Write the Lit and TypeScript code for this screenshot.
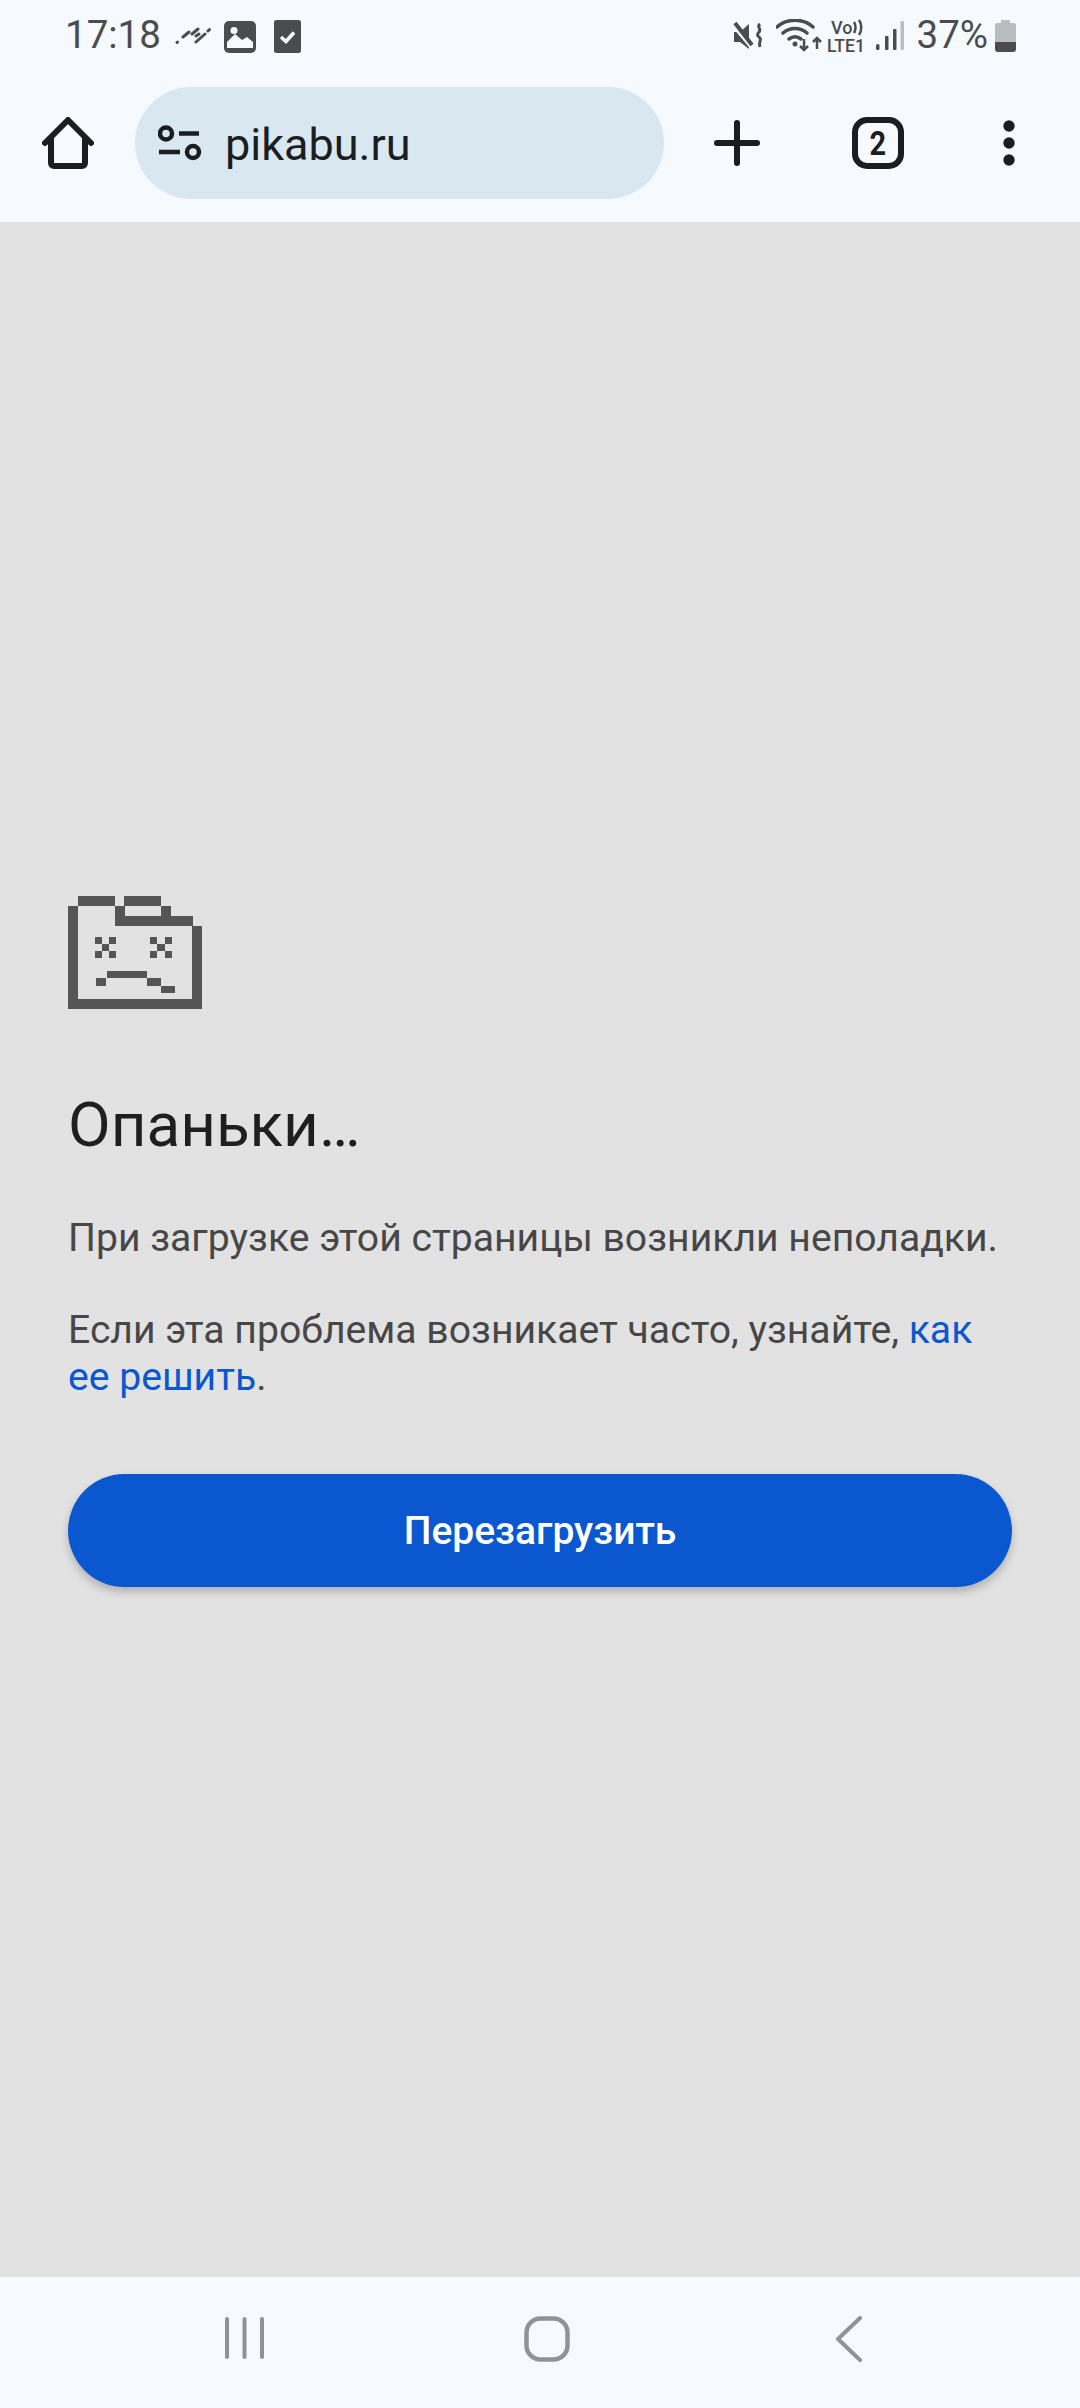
import { LitElement, html, css } from "lit";
import { customElement } from "lit/decorators.js";

@customElement("app-root")
export class AppRoot extends LitElement {
  static styles = css`
    :host { display: block; font-family: Roboto, "Noto Sans", sans-serif; }
    svg { display: block; flex: none; }
    .page { width: 1080px; height: 2408px; display: flex; flex-direction: column; background: #e2e2e2; }
    .top { background: #f6faff; height: 222px; display: flex; flex-direction: column; flex: none; border-bottom: 1px solid #e0e3e6; box-sizing: content-box; }
    .status { height: 70px; padding: 15px 64px 0 65px; display: flex; justify-content: space-between; align-items: flex-start; box-sizing: border-box; color: #4a4c4e; }
    .group { display: flex; align-items: flex-start; }
    .time, .pct { font-size: 38.5px; line-height: 40px; letter-spacing: 0; white-space: nowrap; }
    .toolbar { display: flex; align-items: center; height: 112px; margin-top: 17px; padding-left: 42px; color: #1a1e21; }
    .pill { margin-left: 41px; width: 529px; height: 112px; border-radius: 56px; background: #d9e7f0; display: flex; align-items: center; padding-left: 23px; box-sizing: border-box; }
    .url { margin-left: 23px; margin-top: 3px; font-size: 45px; line-height: 52px; }
    .plus { margin-left: 50px; }
    .tabs { margin-left: 92px; width: 52px; height: 52px; box-sizing: border-box; border: 6px solid #1a1e21; border-radius: 15px; display: flex; align-items: center; justify-content: center; font-size: 34px; line-height: 40px; font-weight: 700; }
    .tabs span { display: block; transform: scaleX(.85); }
    .dots { margin-left: 99px; }
    main { flex: 1; padding: 673px 68px 0; display: flex; flex-direction: column; }
    h1 { margin: 80px 0 0; font-size: 62px; line-height: 72px; font-weight: 400; color: #1f1f1f; }
    p { margin: 0; font-size: 39.15px; line-height: 47px; color: #474747; }
    .p1 { margin-top: 54px; }
    .p2 { margin-top: 45px; }
    a { color: #0b57d0; text-decoration: none; }
    button { margin-top: 73px; height: 113px; width: 944px; border: 0; border-radius: 57px; background: #0b57d0; color: #fff; font: 500 39px Roboto, sans-serif; box-shadow: 0 5px 8px rgba(0,0,0,.22); padding: 0; }
    .nav { height: 132px; flex: none; background: #f6faff; border-top: 1px solid #e4e7ea; box-sizing: border-box; display: flex; padding: 39px 0 0 224px; }
    .nav .h { margin-left: 260px; }
    .nav .b { margin-left: 266px; }
  `;

  render() {
    return html`<div class="page">
      <div class="top">
        <div class="status">
          <div class="group">
            <span class="time">17:18</span>
            <svg style="margin:12px 0 0 14px" width="36" height="18" viewBox="0 0 36 18" fill="none" stroke="#4a4c4e" stroke-width="3" stroke-linecap="round"><path d="M2 15.500l.5-.5M8 10l6-5M17 7l6-5M21 15l9-8M33 4l1.500-1.500M21 9l3-2"/></svg>
            <svg style="margin:6px 0 0 13px" width="32" height="32" viewBox="0 0 32 32"><rect width="32" height="32" rx="5" fill="#4a4c4e"/><path d="M3 27V21L11 13 18 19 23 16 29 21V27Z" fill="#f6faff"/><circle cx="10" cy="9.500" r="3.500" fill="#f6faff"/></svg>
            <svg style="margin:5px 0 0 18px" width="27" height="33" viewBox="0 0 27 33"><rect width="27" height="33" rx="2.500" fill="#4a4c4e"/><path d="M7 17l5 4.500 8-9" fill="none" stroke="#f6faff" stroke-width="3.500"/></svg>
          </div>
          <div class="group">
            <svg style="margin-top:7px" width="30" height="29" viewBox="0 0 30 29" fill="#4a4c4e"><path d="M1 10h6L16 2V27L7 20H1Z"/><path d="M-1 1l20 24" stroke="#f6faff" stroke-width="5"/><path d="M2 1l17 22" stroke="#4a4c4e" stroke-width="4"/><path d="M27 2c-4 3 2 5-1 8s-1 4 1 6-2 4 0 9" fill="none" stroke="#4a4c4e" stroke-width="3"/></svg>
            <svg style="margin-top:4px;margin-left:13px" width="46" height="33" viewBox="0 0 46 33" fill="none" stroke="#4a4c4e" stroke-width="3.500" stroke-linecap="round"><path d="M1 8C11-1 27-1 37 8M7 14c7-6 17-6 24 0M13 20c4-3 8-3 12 0"/><circle cx="19" cy="25" r="2.500" fill="#4a4c4e" stroke="none"/><path d="M28 20v10M24 27l4 4 4-4M41 30V20M37 23l4-4 4 4" stroke-width="2.500" stroke-linecap="butt"/></svg>
            <svg style="margin-top:1px;margin-left:5px" width="40" height="42" viewBox="0 0 40 42" fill="#4a4c4e" font-family="Roboto, sans-serif" font-weight="500"><text x="4" y="18" font-size="18">Vo</text><text x="0" y="36" font-size="18" textLength="38" lengthAdjust="spacingAndGlyphs">LTE1</text><path d="M27 6c2 3 2 8 0 11M32 4c3 4 3 11 0 15" fill="none" stroke="#4a4c4e" stroke-width="2.500"/></svg>
            <svg style="margin-top:5px;margin-left:9px" width="28" height="31" viewBox="0 0 28 31"><rect x="0" y="24" width="3.500" height="6" rx="1.500" fill="#4a4c4e"/><rect x="9" y="16" width="3.500" height="14" rx="1" fill="#4a4c4e"/><rect x="17" y="9" width="3.500" height="21" rx="1" fill="#4a4c4e"/><rect x="24.500" y="1" width="3.500" height="29" rx="1" fill="#babdc0"/></svg>
            <span class="pct" style="margin-left:13px">37%</span>
            <svg style="margin-top:5px;margin-left:7px" width="21" height="32" viewBox="0 0 21 32"><path d="M6 0H15V3H19C20 3 21 4 21 5V22H0V5C0 4 1 3 2 3H6Z" fill="#babdc0"/><path d="M0 22H21V29C21 31 20 32 18 32H3C1 32 0 31 0 29Z" fill="#4a4c4e"/></svg>
          </div>
        </div>
        <div class="toolbar">
          <svg width="52" height="52" viewBox="0 0 52 52" fill="none" stroke="#1a1e21" stroke-width="6" stroke-linejoin="round" stroke-linecap="round"><path d="M3 26L26 3 49 26M9 22V46c0 1.500 1 3 3 3H40c2 0 3-1.500 3-3V22"/></svg>
          <div class="pill">
            <svg width="44" height="36" viewBox="0 0 44 36" fill="none" stroke="#1a1e21" stroke-width="4.500"><circle cx="8" cy="8.500" r="6"/><path d="M21 8.500H41M1 27H22"/><circle cx="35" cy="27" r="6"/></svg>
            <span class="url">pikabu.ru</span>
          </div>
          <svg class="plus" width="46" height="46" viewBox="0 0 46 46" fill="none" stroke="#1a1e21" stroke-width="6" stroke-linecap="round"><path d="M23 3V43M3 23H43"/></svg>
          <div class="tabs"><span>2</span></div>
          <svg class="dots" width="12" height="46" viewBox="0 0 12 46" fill="#1a1e21"><circle cx="6" cy="6" r="5.700"/><circle cx="6" cy="23" r="5.700"/><circle cx="6" cy="40" r="5.700"/></svg>
        </div>
      </div>
      <main>
        <svg width="134" height="113" viewBox="0 0 134 113" fill="#555" shape-rendering="crispEdges">
          <path d="M10 0H47V10H10ZM56 0H93V10H56ZM0 10H10V103H124V30H134V113H0ZM47 10H57V20H93V10H103V20H125V30H47Z" fill-rule="evenodd"/>
          <path d="M27 41h7v7h-7ZM41 41h7v7h-7ZM34 48h7v7h-7ZM27 55h7v7h-7ZM41 55h7v7h-7ZM82 41h7v7h-7ZM97 41h7v7h-7ZM89 48h8v7h-8ZM82 55h7v7h-7ZM97 55h7v7h-7Z"/>
          <path d="M28 82H38V90H28ZM39 75H79V82H39ZM79 82H93V90H79ZM93 90H107V97H93Z"/>
        </svg>
        <h1>Опаньки…</h1>
        <p class="p1">При загрузке этой страницы возникли неполадки.</p>
        <p class="p2">Если эта проблема возникает часто, узнайте, <a>как ее решить</a>.</p>
        <button>Перезагрузить</button>
      </main>
      <div class="nav">
        <svg width="40" height="44" viewBox="0 0 40 44" fill="none" stroke="#909396" stroke-width="4" stroke-linecap="round"><path d="M3 3V41M20.500 3V41M38 3V41"/></svg>
        <svg class="h" width="46" height="46" viewBox="0 0 46 46" fill="none" stroke="#909396" stroke-width="4.500"><rect x="2.500" y="2.500" width="41" height="41" rx="14"/></svg>
        <svg class="b" width="28" height="46" viewBox="0 0 28 46" fill="none" stroke="#909396" stroke-width="4" stroke-linecap="round" stroke-linejoin="round"><path d="M24 2L2 23 24 44"/></svg>
      </div>
    </div>`;
  }
}
